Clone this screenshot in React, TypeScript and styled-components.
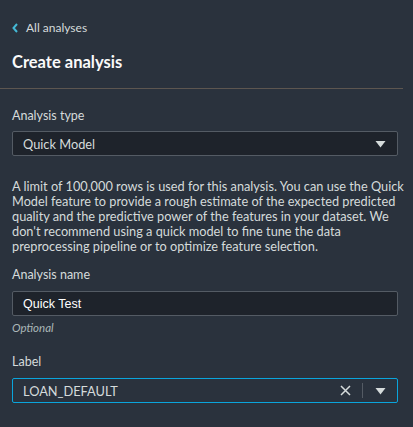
import React from "react";
import styled, { createGlobalStyle } from "styled-components";

const Global = createGlobalStyle`
  html, body { margin: 0; padding: 0; background: #2a323d; }
  body { font-family: Lato, "Open Sans", sans-serif; color: #d5dbdb; }
  * { box-sizing: border-box; }
`;

const Page = styled.div`
  width: 413px;
  height: 427px;
  background: #2a323d;
  display: flex;
  flex-direction: column;
`;

const Header = styled.header`
  padding: 20px 12px 0;
  display: flex;
  flex-direction: column;
`;

const BackLink = styled.a`
  display: flex;
  align-items: center;
  gap: 8px;
  height: 16px;
  font-size: 12px;
  line-height: 16px;
  color: #d5dbdb;
  text-decoration: none;
`;

const Title = styled.h1`
  margin: 15px 0 15px;
  font-size: 16.5px;
  line-height: 22px;
  font-weight: 700;
  color: #fafafa;
`;

const Divider = styled.hr`
  margin: 0;
  border: 0;
  height: 1px;
  width: 403px;
  background: #5d5650;
`;

const Body = styled.main`
  padding: 0 15px 0 12px;
  display: flex;
  flex-direction: column;
`;

const FieldLabel = styled.label<{ $top: number }>`
  margin-top: ${(p) => p.$top}px;
  font-size: 12.5px;
  line-height: 16px;
  color: #d5dbdb;
`;

const Box = styled.div<{ $focused?: boolean; $gap?: number }>`
  margin-top: ${(p) => p.$gap ?? 7}px;
  height: 25px;
  display: flex;
  align-items: center;
  background: ${(p) => (p.$focused ? "#2a323d" : "#1e232b")};
  border: 1px solid ${(p) => (p.$focused ? "#0aa5dc" : "#545b64")};
  border-radius: 2px;
  padding: 0 0 0 10px;
`;

const BoxText = styled.span<{ $plain?: boolean }>`
  flex: 1;
  font-size: ${(p) => (p.$plain ? 12.5 : 12.8)}px;
  line-height: 16px;
  color: ${(p) => (p.$plain ? "#ffffff" : "#d5dbdb")};
  font-family: ${(p) =>
    p.$plain ? '"Liberation Sans", Arial, sans-serif' : 'Lato, sans-serif'};
`;

const IconSlot = styled.span`
  width: 34px;
  height: 100%;
  display: flex;
  align-items: center;
  justify-content: center;
`;

const Sep = styled.span`
  width: 1px;
  height: 15px;
  background: #545b64;
`;

const Description = styled.p`
  margin: 23px 0 0;
  font-size: 12.75px;
  line-height: 15px;
  color: #d5dbdb;
  white-space: nowrap;
`;

const Hint = styled.span`
  margin-top: 5px;
  font-size: 11.5px;
  line-height: 14px;
  font-style: italic;
  color: #aab7b8;
`;

const Caret = () => (
  <svg width="11" height="8" viewBox="0 0 11 8">
    <path d="M0.5 1 L10.5 1 L5.5 7.5 Z" fill="#d5dbdb" />
  </svg>
);

const Close = () => (
  <svg width="11" height="11" viewBox="0 0 11 11">
    <path d="M1 1 L10 10 M10 1 L1 10" stroke="#d5dbdb" strokeWidth="1.5" fill="none" />
  </svg>
);

const Chevron = () => (
  <svg width="6" height="10" viewBox="0 0 6 10">
    <path d="M5 1 L1.5 5 L5 9" stroke="#44b9d6" strokeWidth="2" fill="none" />
  </svg>
);

export default function App() {
  return (
    <Page>
      <Global />
      <Header>
        <BackLink href="#">
          <Chevron />
          All analyses
        </BackLink>
        <Title>Create analysis</Title>
      </Header>
      <Divider />
      <Body>
        <FieldLabel $top={19}>Analysis type</FieldLabel>
        <Box>
          <BoxText>Quick Model</BoxText>
          <IconSlot>
            <Caret />
          </IconSlot>
        </Box>
        <Description>
          A limit of 100,000 rows is used for this analysis. You can use the Quick
          <br />
          Model feature to provide a rough estimate of the expected predicted
          <br />
          quality and the predictive power of the features in your dataset. We
          <br />
          don't recommend using a quick model to fine tune the data
          <br />
          preprocessing pipeline or to optimize feature selection.
        </Description>
        <FieldLabel $top={13}>Analysis name</FieldLabel>
        <Box $gap={8}>
          <BoxText $plain>Quick Test</BoxText>
        </Box>
        <Hint>Optional</Hint>
        <FieldLabel $top={19}>Label</FieldLabel>
        <Box $focused $gap={8}>
          <BoxText>LOAN_DEFAULT</BoxText>
          <IconSlot>
            <Close />
          </IconSlot>
          <Sep />
          <IconSlot>
            <Caret />
          </IconSlot>
        </Box>
      </Body>
    </Page>
  );
}
